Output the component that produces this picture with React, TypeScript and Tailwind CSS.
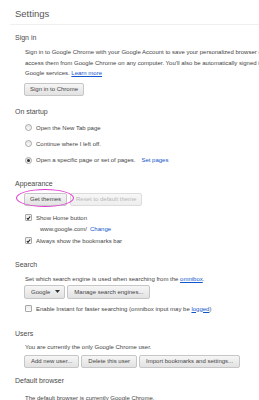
import React from 'react'

function Btn({ children, disabled, className = '' }: { children: React.ReactNode; disabled?: boolean; className?: string }) {
  return (
    <div
      className={`flex items-center h-[13px] px-[5px] rounded-[2px] border text-[6px] leading-none whitespace-nowrap bg-linear-to-b ${
        disabled
          ? 'border-[#dcdcdc] from-[#f7f7f7] to-[#eeeeee] text-[#b8b8b8]'
          : 'border-[#c6c6c6] from-[#f6f6f6] to-[#e2e2e2] text-[#444]'
      } ${className}`}
    >
      {children}
    </div>
  )
}

function Radio({ checked }: { checked?: boolean }) {
  return (
    <div className="w-[7px] h-[7px] rounded-full border border-[#a8a8a8] bg-linear-to-b from-[#e6e6e6] to-[#fafafa] flex items-center justify-center shrink-0">
      {checked && <div className="w-[3px] h-[3px] rounded-full bg-[#333]" />}
    </div>
  )
}

function Check({ checked }: { checked?: boolean }) {
  return (
    <div className="w-[7px] h-[7px] rounded-[1px] border border-[#a8a8a8] bg-linear-to-b from-[#ececec] to-[#fcfcfc] flex items-center justify-center shrink-0">
      {checked && (
        <svg width="6" height="6" viewBox="0 0 6 6">
          <path d="M1 3.2 L2.4 4.6 L5 1.2" fill="none" stroke="#222" strokeWidth="1.3" />
        </svg>
      )}
    </div>
  )
}

function Header({ children, className = '' }: { children: React.ReactNode; className?: string }) {
  return <div className={`h-[14px] flex items-center text-[7px] leading-none text-[#4a4a4a] ${className}`}>{children}</div>
}

export default function App() {
  return (
    <div className="relative w-[259px] h-[400px] overflow-hidden bg-white pl-[15px] font-['Liberation_Sans',Arial,sans-serif] text-[#444] leading-none">
      {/* Title */}
      <div className="h-[25px] pt-[4px] flex items-center border-b border-[#f0f0f0] text-[9.5px] text-[#555] -ml-[5px] pl-[5px]">
        Settings
      </div>

      {/* Sign in */}
      <Header className="mt-[5px]">Sign in</Header>
      <div className="pl-[10px]">
        <div className="mt-[3px] text-[6px] leading-[10.5px] whitespace-nowrap">
          <div>Sign in to Google Chrome with your Google Account to save your personalized browser data to the web and</div>
          <div>access them from Google Chrome on any computer. You'll also be automatically signed in to your favorite</div>
          <div>
            Google services. <span className="text-[#1155cc] underline">Learn more</span>
          </div>
        </div>
        <div className="mt-[4px] -ml-[1px] flex">
          <Btn>Sign in to Chrome</Btn>
        </div>
      </div>

      {/* On startup */}
      <Header className="mt-[9px]">On startup</Header>
      <div className="pl-[10px] mt-[1px] text-[6px]">
        <div className="h-[16px] flex items-center gap-[4px]">
          <Radio />
          <span>Open the New Tab page</span>
        </div>
        <div className="h-[16px] flex items-center gap-[4px]">
          <Radio />
          <span>Continue where I left off.</span>
        </div>
        <div className="h-[17px] flex items-center gap-[4px]">
          <Radio checked />
          <span>Open a specific page or set of pages.</span>
          <span className="ml-[2px] text-[#1155cc]">Set pages</span>
        </div>
      </div>

      {/* Appearance */}
      <Header className="mt-[8px]">Appearance</Header>
      <div className="pl-[10px] text-[6px]">
        <div className="mt-[2px] -ml-[1px] flex gap-[3px]">
          <Btn>Get themes</Btn>
          <Btn disabled>Reset to default theme</Btn>
        </div>
        <div className="mt-[6px] h-[12px] flex items-center gap-[4px]">
          <Check checked />
          <span>Show Home button</span>
        </div>
        <div className="h-[11px] flex items-center pl-[15px] gap-[3px]">
          <span>www.google.com/</span>
          <span className="text-[#1155cc]">Change</span>
        </div>
        <div className="h-[12px] flex items-center gap-[4px]">
          <Check checked />
          <span>Always show the bookmarks bar</span>
        </div>
      </div>

      {/* Search */}
      <Header className="mt-[11px]">Search</Header>
      <div className="pl-[10px] text-[6px]">
        <div className="mt-[2px] h-[11px] flex items-center">
          <span>
            Set which search engine is used when searching from the <span className="text-[#1155cc] underline">omnibox</span>.
          </span>
        </div>
        <div className="-ml-[1px] flex gap-[2px]">
          <Btn className="h-[14px] gap-[5px] pl-[6px] pr-[4px]">
            <span>Google</span>
            <svg width="5" height="3" viewBox="0 0 5 3">
              <path d="M0 0 H5 L2.5 3 Z" fill="#333" />
            </svg>
          </Btn>
          <Btn className="h-[14px] px-[6px]">Manage search engines...</Btn>
        </div>
        <div className="mt-[4px] h-[12px] flex items-center gap-[4px]">
          <Check />
          <span>
            Enable Instant for faster searching (omnibox input may be <span className="text-[#1155cc] underline">logged</span>)
          </span>
        </div>
      </div>

      {/* Users */}
      <Header className="mt-[12px]">Users</Header>
      <div className="pl-[10px] text-[6px]">
        <div className="mt-[1px] h-[11px] flex items-center">You are currently the only Google Chrome user.</div>
        <div className="mt-[2px] -ml-[1px] flex gap-[2px]">
          <Btn className="px-[6px]">Add new user...</Btn>
          <Btn className="px-[6px]">Delete this user</Btn>
          <Btn className="px-[6px]">Import bookmarks and settings...</Btn>
        </div>
      </div>

      {/* Default browser */}
      <Header className="mt-[6px]">Default browser</Header>
      <div className="pl-[10px] text-[6px]">
        <div className="mt-[5px] h-[11px] flex items-center">The default browser is currently Google Chrome.</div>
      </div>

      {/* annotation ellipse */}
      <div className="absolute left-[16px] top-[189px] w-[58px] h-[18px] rounded-[50%] border-[1.5px] border-[#e03ad0]" />
    </div>
  )
}
